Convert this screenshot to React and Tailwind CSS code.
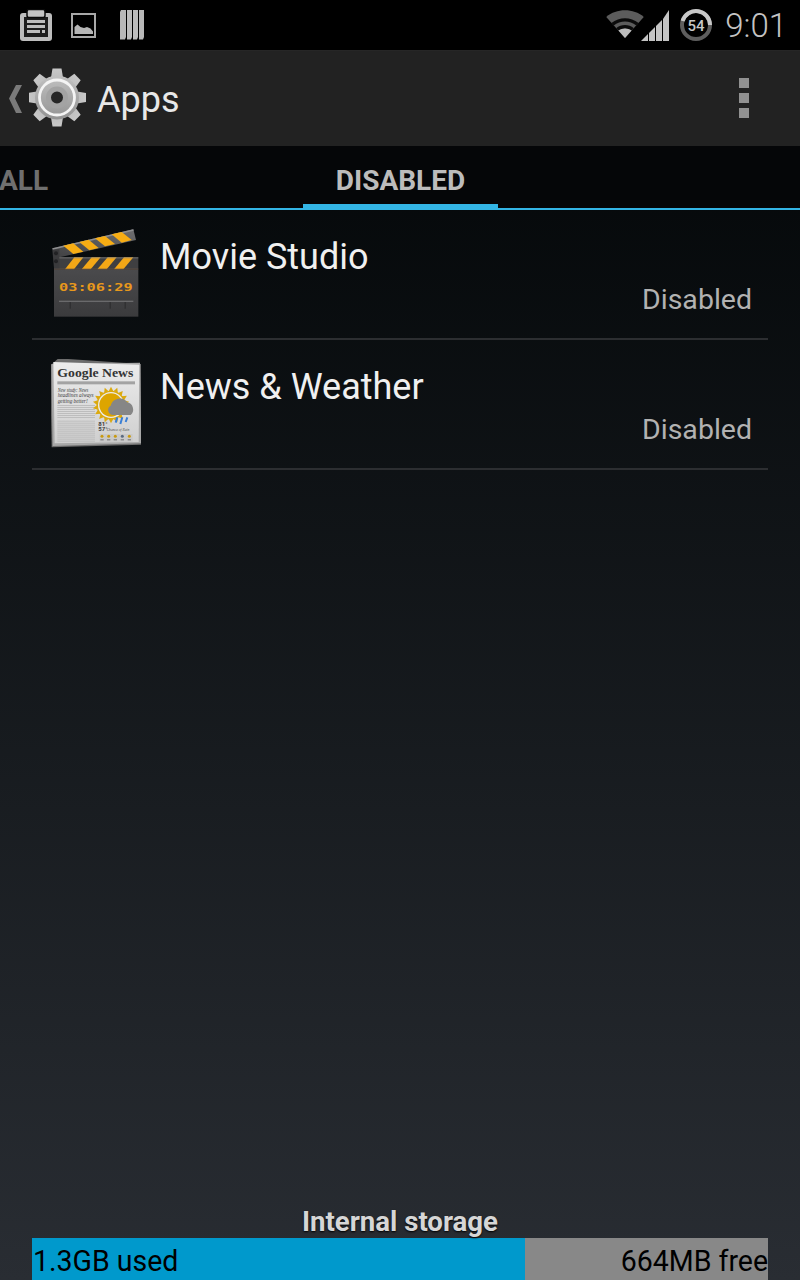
const font = { fontFamily: 'Roboto, sans-serif' };

function Clipboard() {
  return (
    <svg width="32" height="32" viewBox="0 0 32 32" className="block">
      <rect x="0" y="4" width="32" height="28" rx="3" fill="#bdbdbd" />
      <rect x="4" y="8" width="24" height="20" fill="#1d1d1d" />
      <rect x="7" y="0.500" width="18" height="8" rx="2" fill="#c4c4c4" stroke="#0a0a0a" strokeWidth="1.500" />
      <rect x="7" y="11" width="18" height="3" fill="#bdbdbd" />
      <rect x="7" y="16" width="18" height="3" fill="#bdbdbd" />
      <rect x="7" y="21" width="13" height="3" fill="#bdbdbd" />
      <rect x="22" y="21" width="3" height="3" fill="#bdbdbd" />
    </svg>
  );
}

function Picture() {
  return (
    <svg width="25" height="25" viewBox="0 0 25 25" className="block">
      <rect x="1" y="1" width="23" height="23" fill="none" stroke="#a8a8a8" strokeWidth="2" />
      <path d="M3.500 21V14l3-2.500 3 2.500 3.500 1 3-1 3.500 1.500 2.500 3V21z" fill="#b5b5b5" />
    </svg>
  );
}

function Books() {
  return (
    <svg width="24" height="30" viewBox="0 0 24 30" className="block">
      <path d="M1 0h5v27l-1 2.500H0V2z" fill="#b8b8b8" />
      <path d="M7 0h5v27l-1 2.500H7z" fill="#bdbdbd" />
      <path d="M13 0h5v27l-1 2.500h-4z" fill="#bdbdbd" />
      <path d="M19 0h5v27l-1 2.500h-4z" fill="#b8b8b8" />
    </svg>
  );
}

function Wifi() {
  return (
    <svg width="38" height="30" viewBox="0 0 40 32" className="block">
      <path d="M0 8.500C11-1 29-1 40 8.500L20 31z" fill="#5c5c5c" />
      <path d="M5.500 15C14 8 26 8 34.500 15l-2.500 2.500C25 12 15 12 8 17.500z" fill="#0b0b0b" />
      <path d="M10.500 20.500C16 16 24 16 29.500 20.500L27 23C23 20 17 20 13 23z" fill="#0b0b0b" />
      <path d="M13 23C17 20 23 20 27 23L20 31z" fill="#bdbdbd" />
    </svg>
  );
}

function Signal() {
  return (
    <svg width="28" height="32" viewBox="0 0 28 32" className="block">
      <path d="M0 32 7 25V32z" fill="#c4c4c4" />
      <path d="M8 24l6-6V32H8z" fill="#c4c4c4" />
      <path d="M15 17l6-6V32h-6z" fill="#c4c4c4" />
      <path d="M22 10l6-9V32h-6z" fill="#c4c4c4" />
    </svg>
  );
}

function Battery() {
  return (
    <svg width="34" height="34" viewBox="0 0 34 34" className="block">
      <circle cx="17" cy="17" r="14" fill="none" stroke="#5e5e5e" strokeWidth="4" />
      <path d="M31 17A14 14 0 0 0 3.600 13" fill="none" stroke="#c8c8c8" strokeWidth="4" />
      <text x="17" y="22.500" textAnchor="middle" fontSize="15" fontWeight="500" fontFamily="Roboto, sans-serif" fill="#c8c8c8">54</text>
    </svg>
  );
}

function Gear() {
  const teeth = [0, 45, 90, 135, 180, 225, 270, 315];
  return (
    <svg width="60" height="60" viewBox="0 0 60 60" className="block">
      <defs>
        <linearGradient id="gearFill" gradientUnits="userSpaceOnUse" x1="0" y1="0" x2="0" y2="60">
          <stop offset="0" stopColor="#c9c9c9" />
          <stop offset="1" stopColor="#8a8a8a" />
        </linearGradient>
      </defs>
      {teeth.map((a) => (
        <path key={a} d="M23.500 0.500h9l2 12H21.500z" fill="url(#gearFill)" transform={`rotate(${a} 28 29.500)`} />
      ))}
      <circle cx="28" cy="29.500" r="22" fill="url(#gearFill)" />
      <circle cx="28" cy="29.500" r="17.500" fill="none" stroke="#f4f4f4" strokeWidth="2.800" />
      <circle cx="28" cy="29.500" r="8.500" fill="#262626" stroke="#a3a3a3" strokeWidth="5" />
    </svg>
  );
}

function Clapper() {
  return (
    <svg width="90" height="90" viewBox="0 0 90 90" className="block">
      <defs>
        <linearGradient id="clapBody" x1="0" y1="0" x2="0" y2="1">
          <stop offset="0" stopColor="#4a4a4c" />
          <stop offset="1" stopColor="#3b3b3d" />
        </linearGradient>
        <linearGradient id="clapArm" x1="0" y1="1" x2="1" y2="0">
          <stop offset="0" stopColor="#3f3f41" />
          <stop offset="1" stopColor="#6e6e70" />
        </linearGradient>
      </defs>
      <g transform="translate(-11 -9) scale(0.33333)">
        <path d="M37 85 280 28l8 32L45 115z" fill="url(#clapArm)" />
        <path d="M37 85 280 28l1 4L38 89z" fill="#8e8e90" />
        <path d="M70 77 100 70 130 95 100 102z" fill="#f7ad14" />
        <path d="M118 66 146 59 176 84 148 91z" fill="#f7ad14" />
        <path d="M165 55 195 48 225 72 195 79z" fill="#f7ad14" />
        <path d="M215 43 245 36 275 60 245 68z" fill="#f7ad14" />
        <rect x="42" y="112" width="253" height="36" fill="#3f3f41" />
        <path d="M75 148 103 112H130L102 148z" fill="#f4a716" />
        <path d="M125 148 155 112H182L152 148z" fill="#f4a716" />
        <path d="M172 148 203 112H230L200 148z" fill="#f4a716" />
        <path d="M222 148 252 112H280L250 148z" fill="#f4a716" />
        <rect x="42" y="112" width="253" height="3" fill="#8a8a8a" opacity="0.7" />
        <rect x="42" y="146" width="253" height="3" fill="#6b5445" />
        <path d="M37 90 58 88V145H42z" fill="#3a3a3c" />
        <circle cx="48" cy="100" r="6" fill="#222224" />
        <circle cx="48" cy="124" r="6" fill="#222224" />
        <rect x="42" y="149" width="253" height="141" fill="url(#clapBody)" />
        <text x="57" y="212" fontSize="33" fontWeight="700" fontFamily="DejaVu Sans Mono, monospace" textLength="221" lengthAdjust="spacingAndGlyphs" fill="#e8981c">03:06:29</text>
        <rect x="57" y="242" width="223" height="4" fill="#6a6a6c" />
        <rect x="89" y="246" width="3" height="20" fill="#2a2a2c" />
        <rect x="209" y="246" width="3" height="20" fill="#2a2a2c" />
        <rect x="254" y="246" width="3" height="20" fill="#2a2a2c" />
      </g>
    </svg>
  );
}

function News() {
  const rays = Array.from({ length: 18 }, (_, i) => i * 20);
  const body = [];
  for (let y = 165; y < 205; y += 6) body.push(y);
  for (let y = 212; y < 278; y += 6) body.push(y);
  return (
    <svg width="90" height="90" viewBox="0 0 90 90" className="block">
      <defs>
        <linearGradient id="paper" x1="0" y1="0" x2="0" y2="1">
          <stop offset="0" stopColor="#ececec" />
          <stop offset="1" stopColor="#cfcfcf" />
        </linearGradient>
      </defs>
      <g transform="translate(-11 -9) scale(0.33333)">
        <path d="M30 48 55 25 306 42 306 284 35 292z" fill="#6e6e6e" />
        <path d="M34 42 300 38 304 280 38 288z" fill="#a8a8a8" />
        <path d="M40 36 298 44 296 276 44 280z" fill="url(#paper)" />
        <text x="52" y="82" fontSize="40" fontWeight="700" fontFamily="Liberation Serif, serif" textLength="228" lengthAdjust="spacingAndGlyphs" fill="#333333">Google News</text>
        <rect x="52" y="94" width="233" height="9" fill="#a3a3a3" />
        <text x="53" y="125" fontSize="20" fontStyle="italic" fontFamily="Liberation Serif, serif" textLength="92" lengthAdjust="spacingAndGlyphs" fill="#3c3c3c">New study: News</text>
        <text x="53" y="142" fontSize="20" fontStyle="italic" fontFamily="Liberation Serif, serif" textLength="108" lengthAdjust="spacingAndGlyphs" fill="#3c3c3c">headlines always</text>
        <text x="53" y="158" fontSize="20" fontStyle="italic" fontFamily="Liberation Serif, serif" textLength="90" lengthAdjust="spacingAndGlyphs" fill="#3c3c3c">getting better!</text>
        {body.map((y) => (
          <rect key={y} x="52" y={y} width="113" height="3" fill="#bdbdbd" />
        ))}
        {rays.map((a) => (
          <path key={a} d="M213 110l7 14h-14z" fill="#dba90e" transform={`rotate(${a} 213 165)`} />
        ))}
        <circle cx="213" cy="165" r="43" fill="#dba90e" />
        <circle cx="213" cy="165" r="39" fill="#ececec" />
        <circle cx="213" cy="165" r="35" fill="#dda500" />
        <path d="M218 195a15 15 0 0 1-6-28 28 28 0 0 1 50-10 22 22 0 0 1 10 38z" fill="#868686" />
        <path d="M232 202l-5 16M247 202l-6 20M262 202l-5 14" stroke="#3a7fd5" strokeWidth="6" />
        <text x="175" y="228" fontSize="18" fontWeight="700" fontFamily="Roboto, sans-serif" fill="#3a3a3a">81°</text>
        <text x="175" y="244" fontSize="18" fontWeight="700" fontFamily="Roboto, sans-serif" fill="#3a3a3a">57°</text>
        <text x="200" y="243" fontSize="11" fontStyle="italic" fontFamily="Liberation Serif, serif" fill="#555555">Chance of Rain</text>
        <rect x="178" y="252" width="100" height="24" fill="#c9c9c9" />
        {[186, 206, 226, 247, 268].map((x) => (
          <g key={x}>
            <circle cx={x} cy="259" r="4.500" fill={x === 247 ? '#5a6a80' : '#c99a10'} />
            <rect x={x - 5} y="268" width="10" height="3" fill="#707070" />
          </g>
        ))}
      </g>
    </svg>
  );
}

function Row({ name, icon }) {
  return (
    <div className="mx-8 h-[130px] border-b-2 border-[#2c2e31] flex">
      <div className="w-[128px] pl-[19px] pt-[19px] shrink-0">{icon}</div>
      <div className="flex-1 pr-4">
        <div className="text-[36px] leading-[42px] text-[#f0f0f0] pt-[26px]">{name}</div>
        <div className="text-right text-[28.500px] leading-[34px] text-[#b2b2b2] mt-[5px]">Disabled</div>
      </div>
    </div>
  );
}

export default function App() {
  return (
    <div
      style={font}
      className="w-[800px] h-[1280px] overflow-hidden flex flex-col bg-gradient-to-b from-[#030506] to-[#292d33]"
    >
      <div className="h-[50px] bg-black flex items-center shrink-0">
        <div className="ml-[20px]"><Clipboard /></div>
        <div className="ml-[19px]"><Picture /></div>
        <div className="ml-[24px] mb-[1px]"><Books /></div>
        <div className="ml-auto flex items-center">
          <div className="mb-[2px]"><Wifi /></div>
          <div className="ml-[-3px]"><Signal /></div>
          <div className="ml-[10px]"><Battery /></div>
          <div className="ml-[12px] mr-[13px] text-[33px] leading-[40px] mt-[1px] font-light text-[#c4c4c4]">9:01</div>
        </div>
      </div>

      <div className="h-[96px] bg-[#222222] flex items-center shrink-0 border-t border-[#262626]">
        <svg width="14" height="30" viewBox="0 0 14 30" className="ml-[8px] block">
          <path d="M14 1h-6L1 14.500 8 29h6L7 14.500z" fill="#7a7a7a" />
        </svg>
        <div className="ml-[7px] mt-[-1px]"><Gear /></div>
        <div className="ml-[8px] mt-[2px] text-[36px] leading-[42px] text-[#e8e8e8]">Apps</div>
        <div className="ml-auto mr-[51px] mt-[-2px] flex flex-col gap-[5px]">
          <div className="w-[10px] h-[10px] bg-[#919191]" />
          <div className="w-[10px] h-[10px] bg-[#919191]" />
          <div className="w-[10px] h-[10px] bg-[#919191]" />
        </div>
      </div>

      <div className="h-[64px] bg-[#050608] relative shrink-0 border-b-2 border-[#33b5e5]">
        <div className="absolute left-[-1px] top-[18px] text-[28px] leading-[33px] font-bold text-[#6f6f6f]">ALL</div>
        <div className="absolute left-[303px] w-[195px] top-[18px] h-[44px] border-b-4 border-[#33b5e5] text-center text-[28px] leading-[33px] font-bold text-[#bcbcbc]">DISABLED</div>
      </div>

      <Row name="Movie Studio" icon={<Clapper />} />
      <Row name="News & Weather" icon={<News />} />

      <div className="mt-auto">
        <div className="text-center text-[28px] leading-[28px] font-bold scale-x-[0.985] text-[#d6d6d6] [text-shadow:0_1px_2px_#000]">Internal storage</div>
        <div className="mx-8 h-[42px] mt-[2px] flex text-[30px] leading-[45px] text-black">
          <div className="w-[493px] bg-[#0099cc] pl-[1px]">
            <span className="inline-block origin-left scale-x-[0.95]">1.3GB used</span>
          </div>
          <div className="flex-1 bg-[#888888] text-right">
            <span className="inline-block origin-right scale-x-[0.95]">664MB free</span>
          </div>
        </div>
      </div>
    </div>
  );
}
